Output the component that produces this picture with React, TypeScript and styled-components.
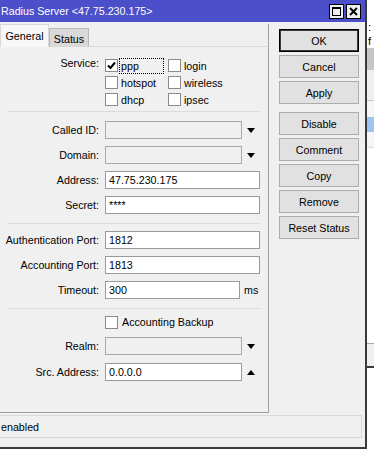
import React from "react";
import styled, { createGlobalStyle } from "styled-components";

const GlobalStyle = createGlobalStyle`
  html, body { margin: 0; padding: 0; background: #fff; }
  body {
    font-family: "Liberation Sans", Arial, sans-serif;
    font-size: 10.7px;
    color: #000;
  }
`;

const Screen = styled.div`
  display: flex;
  width: 374px;
  height: 450px;
  overflow: hidden;
  background: #fff;
`;

const Window = styled.div`
  flex-shrink: 0;
  width: 365px;
  height: 447px;
  background: #f0f0f0;
  border-right: 2px solid #3a3a3a;
  border-bottom: 2px solid #3a3a3a;
  display: flex;
  flex-direction: column;
`;

const TitleBar = styled.div`
  height: 22px;
  background: #4b4fc9;
  color: #fff;
  display: flex;
  align-items: center;
  padding-left: 1px;
  font-size: 10.7px;
`;

const TitleButtons = styled.div`
  margin-left: auto;
  margin-right: 4px;
  display: flex;
  gap: 2px;
`;

const TitleButton = styled.div`
  width: 13px;
  height: 13px;
  background: #f0f0f0;
  border: 1px solid #000;
  display: flex;
  align-items: center;
  justify-content: center;
`;

const Body = styled.div`
  display: flex;
  margin-top: 2px;
`;

const LeftCol = styled.div`
  width: 269px;
  display: flex;
  flex-direction: column;
`;

const TabStrip = styled.div`
  display: flex;
  height: 23px;
`;

const Tab = styled.div<{ $active?: boolean }>`
  box-sizing: border-box;
  display: flex;
  align-items: center;
  justify-content: center;
  margin-top: ${({ $active }) => ($active ? 0 : 4)}px;
  width: ${({ $active }) => ($active ? 49 : 40)}px;
  background: ${({ $active }) => ($active ? "#f7f7f7" : "#d9d9d9")};
  border: 1px solid ${({ $active }) => ($active ? "#d9d9d9" : "#b8b8b8")};
  border-bottom: ${({ $active }) => ($active ? "none" : "1px solid #d9d9d9")};
  padding-top: ${({ $active }) => ($active ? 0 : 2)}px;
`;

const TabFiller = styled.div`
  flex: 1;
  border-bottom: 1px solid #d9d9d9;
  border-right: 1px solid #a0a0a0;
`;

const Panel = styled.div`
  box-sizing: border-box;
  height: 366px;
  border-right: 1px solid #a0a0a0;
  border-bottom: 1px solid #a0a0a0;
  padding-top: 10px;
  display: flex;
  flex-direction: column;
`;

const Separator = styled.div<{ $top: number; $bottom: number }>`
  height: 1px;
  background: #dcdcdc;
  margin: ${({ $top }) => $top}px 8px ${({ $bottom }) => $bottom}px 8px;
`;

const FieldGroup = styled.div<{ $gap?: number }>`
  display: flex;
  flex-direction: column;
  gap: ${({ $gap }) => $gap ?? 7}px;
`;

const Row = styled.div`
  display: flex;
  align-items: center;
  height: 18px;
`;

const Label = styled.div`
  width: 99px;
  margin-right: 6px;
  text-align: right;
  white-space: nowrap;
`;

const Input = styled.div<{ $width: number; $disabled?: boolean }>`
  box-sizing: border-box;
  width: ${({ $width }) => $width}px;
  height: 18px;
  background: ${({ $disabled }) => ($disabled ? "#f0f0f0" : "#fff")};
  border: 1px solid ${({ $disabled }) => ($disabled ? "#a8a8a8" : "#9a9a9a")};
  padding-left: 3px;
  display: flex;
  align-items: center;
`;

const ArrowCell = styled.div`
  width: 18px;
  display: flex;
  justify-content: center;
`;

const Arrow = styled.span<{ $up?: boolean }>`
  width: 0;
  height: 0;
  border-left: 4.5px solid transparent;
  border-right: 4.5px solid transparent;
  ${({ $up }) =>
    $up ? "border-bottom: 5px solid #000;" : "border-top: 5px solid #000;"}
`;

const Unit = styled.span`
  margin-left: 4px;
`;

const ServiceBlock = styled.div`
  display: flex;
`;

const CheckGrid = styled.div`
  display: grid;
  grid-template-columns: 63px auto;
  grid-auto-rows: 17px;
`;

const CheckItem = styled.div`
  display: flex;
  align-items: center;
  gap: 2px;
`;

const Box = styled.span`
  box-sizing: border-box;
  width: 13px;
  height: 13px;
  background: #fff;
  border: 1px solid #8a8a8a;
  display: flex;
  align-items: center;
  justify-content: center;
`;

const CheckText = styled.span<{ $focus?: boolean }>`
  padding: 0 1px;
  ${({ $focus }) =>
    $focus ? "outline: 1px dotted #000; width: 41px; line-height: 14px;" : ""}
`;

const BackupRow = styled.div`
  display: flex;
  align-items: center;
  height: 16px;
  padding-left: 105px;
  margin-bottom: 7px;
  gap: 4px;
`;

const ButtonCol = styled.div`
  margin-left: 10px;
  padding-top: 5px;
  display: flex;
  flex-direction: column;
  gap: 3px;
`;

const Button = styled.div<{ $default?: boolean; $spaced?: boolean }>`
  box-sizing: border-box;
  width: 80px;
  height: 23px;
  background: #e1e1e1;
  border: 1px solid ${({ $default }) => ($default ? "#000" : "#adadad")};
  ${({ $default }) => ($default ? "box-shadow: inset 0 0 0 1px #3a3a3a;" : "")}
  margin-top: ${({ $spaced }) => ($spaced ? 5 : 0)}px;
  display: flex;
  align-items: center;
  justify-content: center;
`;

const StatusBar = styled.div`
  box-sizing: border-box;
  width: 362px;
  height: 23px;
  margin-top: 2px;
  border: 1px solid #d8d8d8;
  border-left: none;
  padding-left: 1px;
  display: flex;
  align-items: center;
`;

const SideStrip = styled.div`
  flex: 1;
  display: flex;
  flex-direction: column;
  overflow: hidden;
`;

const StripBlock = styled.div<{ $h: number; $bg: string }>`
  flex-shrink: 0;
  height: ${({ $h }) => $h}px;
  background: ${({ $bg }) => $bg};
  font-size: 11px;
  line-height: 11px;
  padding-left: 1px;
  overflow: hidden;
`;

const CheckMark = () => (
  <svg width="9" height="9" viewBox="0 0 9 9">
    <path d="M1 4.5 L3.5 7 L8 1.5" stroke="#000" strokeWidth="2" fill="none" />
  </svg>
);

const services = [
  { name: "ppp", checked: true, focus: true },
  { name: "login" },
  { name: "hotspot" },
  { name: "wireless" },
  { name: "dhcp" },
  { name: "ipsec" },
];

const buttons = ["OK", "Cancel", "Apply", "Disable", "Comment", "Copy", "Remove", "Reset Status"];

const strip: [number, string, string?][] = [
  [22, "#fff", ""],
  [14, "#fff", ":"],
  [12, "#fff", "f"],
  [22, "#c6c6c6"],
  [30, "#f0f0f0"],
  [1, "#c8c8c8"],
  [16, "#f6f6f6"],
  [15, "#9fc4ef"],
  [15, "#f6f6f6"],
  [1, "#dcdcdc"],
  [195, "#fff"],
  [1, "#a8a8a8"],
  [22, "#f0f0f0"],
  [2, "#3a3a3a"],
  [82, "#fff"],
];

export default function App() {
  return (
    <>
      <GlobalStyle />
      <Screen>
        <Window>
          <TitleBar>
            Radius Server &lt;47.75.230.175&gt;
            <TitleButtons>
              <TitleButton>
                <svg width="9" height="9" viewBox="0 0 9 9">
                  <rect x="0.5" y="1" width="8" height="7.5" fill="none" stroke="#000" />
                  <rect x="0" y="0" width="9" height="2" fill="#000" />
                </svg>
              </TitleButton>
              <TitleButton>
                <svg width="9" height="9" viewBox="0 0 9 9">
                  <path d="M1 1 L8 8 M8 1 L1 8" stroke="#000" strokeWidth="2" />
                </svg>
              </TitleButton>
            </TitleButtons>
          </TitleBar>
          <Body>
            <LeftCol>
              <TabStrip>
                <Tab $active>General</Tab>
                <Tab>Status</Tab>
                <TabFiller />
              </TabStrip>
              <Panel>
                <ServiceBlock>
                  <Label>Service:</Label>
                  <CheckGrid>
                    {services.map((s) => (
                      <CheckItem key={s.name}>
                        <Box>{s.checked && <CheckMark />}</Box>
                        <CheckText $focus={s.focus}>{s.name}</CheckText>
                      </CheckItem>
                    ))}
                  </CheckGrid>
                </ServiceBlock>
                <Separator $top={3} $bottom={9} />
                <FieldGroup>
                  <Row>
                    <Label>Called ID:</Label>
                    <Input $width={137} $disabled />
                    <ArrowCell><Arrow /></ArrowCell>
                  </Row>
                  <Row>
                    <Label>Domain:</Label>
                    <Input $width={137} $disabled />
                    <ArrowCell><Arrow /></ArrowCell>
                  </Row>
                  <Row>
                    <Label>Address:</Label>
                    <Input $width={155}>47.75.230.175</Input>
                  </Row>
                  <Row>
                    <Label>Secret:</Label>
                    <Input $width={155}>****</Input>
                  </Row>
                </FieldGroup>
                <Separator $top={9} $bottom={7} />
                <FieldGroup>
                  <Row>
                    <Label>Authentication Port:</Label>
                    <Input $width={155}>1812</Input>
                  </Row>
                  <Row>
                    <Label>Accounting Port:</Label>
                    <Input $width={155}>1813</Input>
                  </Row>
                  <Row>
                    <Label>Timeout:</Label>
                    <Input $width={135}>300</Input>
                    <Unit>ms</Unit>
                  </Row>
                </FieldGroup>
                <Separator $top={9} $bottom={5} />
                <BackupRow>
                  <Box />
                  <span>Accounting Backup</span>
                </BackupRow>
                <FieldGroup $gap={8}>
                  <Row>
                    <Label>Realm:</Label>
                    <Input $width={137} $disabled />
                    <ArrowCell><Arrow /></ArrowCell>
                  </Row>
                  <Row>
                    <Label>Src. Address:</Label>
                    <Input $width={137}>0.0.0.0</Input>
                    <ArrowCell><Arrow $up /></ArrowCell>
                  </Row>
                </FieldGroup>
              </Panel>
            </LeftCol>
            <ButtonCol>
              {buttons.map((b) => (
                <Button key={b} $default={b === "OK"} $spaced={b === "Disable"}>
                  {b}
                </Button>
              ))}
            </ButtonCol>
          </Body>
          <StatusBar>enabled</StatusBar>
        </Window>
        <SideStrip>
          {strip.map(([h, bg, t], i) => (
            <StripBlock key={i} $h={h} $bg={bg}>
              {t}
            </StripBlock>
          ))}
        </SideStrip>
      </Screen>
    </>
  );
}
